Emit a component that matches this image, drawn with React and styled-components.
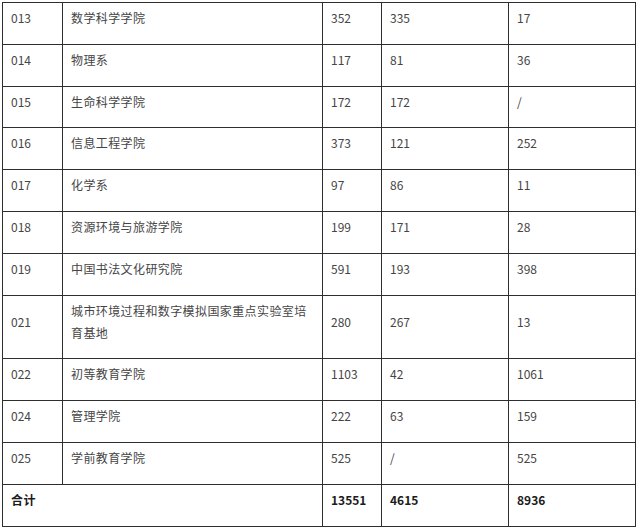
import React from 'react';
import styled, { createGlobalStyle } from 'styled-components';

const GlobalStyle = createGlobalStyle`
  html, body {
    margin: 0;
    padding: 0;
    background: #ffffff;
  }
  body {
    font-family: "Noto Sans CJK SC", "Noto Sans", sans-serif;
  }
`;

const Page = styled.div`
  padding: 2px 0 0 2px;
  width: 640px;
  box-sizing: border-box;
`;

const Table = styled.table`
  border-collapse: collapse;
  table-layout: fixed;
  width: 634px;
`;

const Row = styled.tr``;

const Cell = styled.td`
  border: 1px solid #2e2e2e;
  padding: 4px 8px 14.8px 8px;
  vertical-align: middle;
  font-size: 12px;
  line-height: 22px;
  letter-spacing: ${(p) => (p.$wide ? '0.4px' : '0')};
  color: ${(p) => (p.$bold ? '#1c1c1c' : '#454545')};
  font-weight: ${(p) => (p.$bold ? 700 : 400)};
  word-break: break-all;
`;

const rows = [
  ['013', '数学科学学院', '352', '335', '17'],
  ['014', '物理系', '117', '81', '36'],
  ['015', '生命科学学院', '172', '172', '/'],
  ['016', '信息工程学院', '373', '121', '252'],
  ['017', '化学系', '97', '86', '11'],
  ['018', '资源环境与旅游学院', '199', '171', '28'],
  ['019', '中国书法文化研究院', '591', '193', '398'],
  ['021', '城市环境过程和数字模拟国家重点实验室培育基地', '280', '267', '13'],
  ['022', '初等教育学院', '1103', '42', '1061'],
  ['024', '管理学院', '222', '63', '159'],
  ['025', '学前教育学院', '525', '/', '525'],
];

export default function App() {
  return (
    <Page>
      <GlobalStyle />
      <Table>
        <colgroup>
          <col style={{ width: 60 }} />
          <col style={{ width: 260 }} />
          <col style={{ width: 59 }} />
          <col style={{ width: 127 }} />
          <col style={{ width: 127 }} />
        </colgroup>
        <tbody>
          {rows.map((r) => (
            <Row key={r[0]}>
              <Cell>{r[0]}</Cell>
              <Cell $wide>{r[1]}</Cell>
              <Cell>{r[2]}</Cell>
              <Cell>{r[3]}</Cell>
              <Cell>{r[4]}</Cell>
            </Row>
          ))}
          <Row>
            <Cell colSpan={2} $bold $wide>合计</Cell>
            <Cell $bold>13551</Cell>
            <Cell $bold>4615</Cell>
            <Cell $bold>8936</Cell>
          </Row>
        </tbody>
      </Table>
    </Page>
  );
}
